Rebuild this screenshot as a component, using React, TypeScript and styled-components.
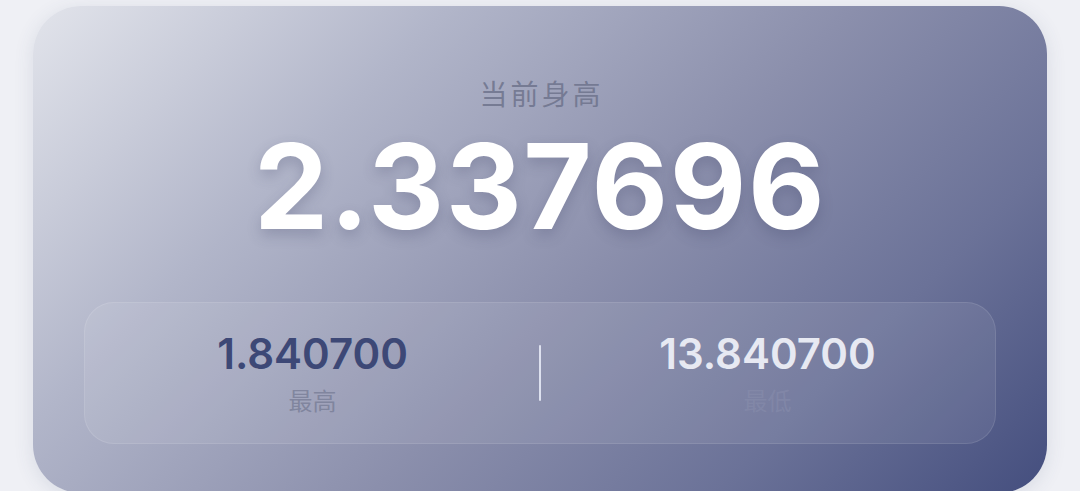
import styled, { createGlobalStyle } from 'styled-components';

const GlobalStyle = createGlobalStyle`
  html, body {
    margin: 0;
    padding: 0;
    background: #eff0f5;
    font-family: Inter, "Noto Sans CJK SC", sans-serif;
  }
`;

interface Stat {
  value: string;
  label: string;
  tone: 'dark' | 'light';
}

const stats: Stat[] = [
  { value: '1.840700', label: '最高', tone: 'dark' },
  { value: '13.840700', label: '最低', tone: 'light' },
];

export default function App() {
  return (
    <>
      <GlobalStyle />
      <Page>
        <HeightCard>
          <Title>当前身高</Title>
          <BigValue>2.337696</BigValue>
          <StatsPanel>
            {stats.map((s, i) => (
              <StatGroup key={s.label}>
                {i > 0 && <Divider />}
                <StatItem>
                  <StatValue $tone={s.tone}>{s.value}</StatValue>
                  <StatLabel $tone={s.tone}>{s.label}</StatLabel>
                </StatItem>
              </StatGroup>
            ))}
          </StatsPanel>
        </HeightCard>
      </Page>
    </>
  );
}

const Page = styled.div`
  width: 1080px;
  height: 491px;
  overflow: hidden;
  padding: 6px 33px 0;
  box-sizing: border-box;
`;

const HeightCard = styled.div`
  height: 487px;
  box-sizing: border-box;
  border-radius: 48px;
  background: linear-gradient(135deg, #e2e4eb 0%, #b1b5c9 28%, #8b8fac 55%, #6b7298 78%, #444e7e 100%);
  box-shadow: 0 4px 20px rgba(60, 70, 110, 0.12);
  padding: 68px 51px 0;
  display: flex;
  flex-direction: column;
  align-items: center;
`;

const Title = styled.div`
  font-family: "Noto Sans CJK SC", sans-serif;
  font-size: 28px;
  line-height: 38px;
  color: rgba(110, 115, 140, 0.85);
  letter-spacing: 3px;
  margin-right: -3px;
`;

const BigValue = styled.div`
  margin-top: 4px;
  font-family: Inter, sans-serif;
  font-weight: 700;
  font-size: 118px;
  line-height: 140px;
  color: #ffffff;
  letter-spacing: 1.5px;
  text-shadow: 0 6px 14px rgba(60, 65, 100, 0.25);
`;

const StatsPanel = styled.div`
  margin-top: 46px;
  align-self: stretch;
  height: 142px;
  border-radius: 30px;
  background: rgba(255, 255, 255, 0.08);
  border: 1px solid rgba(255, 255, 255, 0.1);
  box-sizing: border-box;
  display: flex;
  align-items: center;
`;

const StatGroup = styled.div`
  flex: 1;
  display: flex;
  align-items: center;
  height: 100%;
`;

const StatItem = styled.div`
  flex: 1;
  display: flex;
  flex-direction: column;
  align-items: center;
  padding-bottom: 2px;
`;

const Divider = styled.div`
  width: 2px;
  height: 56px;
  margin-left: -1px;
  margin-right: -1px;
  background: rgba(235, 238, 250, 0.85);
  border-radius: 1px;
`;

const StatValue = styled.div<{ $tone: 'dark' | 'light' }>`
  font-family: Inter, sans-serif;
  font-weight: 600;
  font-size: 42px;
  line-height: 50px;
  color: ${({ $tone }) => ($tone === 'dark' ? '#3d4876' : '#e7e9f2')};
`;

const StatLabel = styled.div<{ $tone: 'dark' | 'light' }>`
  margin-top: 5px;
  font-family: "Noto Sans CJK SC", sans-serif;
  font-size: 24px;
  line-height: 32px;
  color: ${({ $tone }) => ($tone === 'dark' ? 'rgba(120, 125, 150, 0.8)' : 'rgba(140, 145, 175, 0.45)')};
`;
